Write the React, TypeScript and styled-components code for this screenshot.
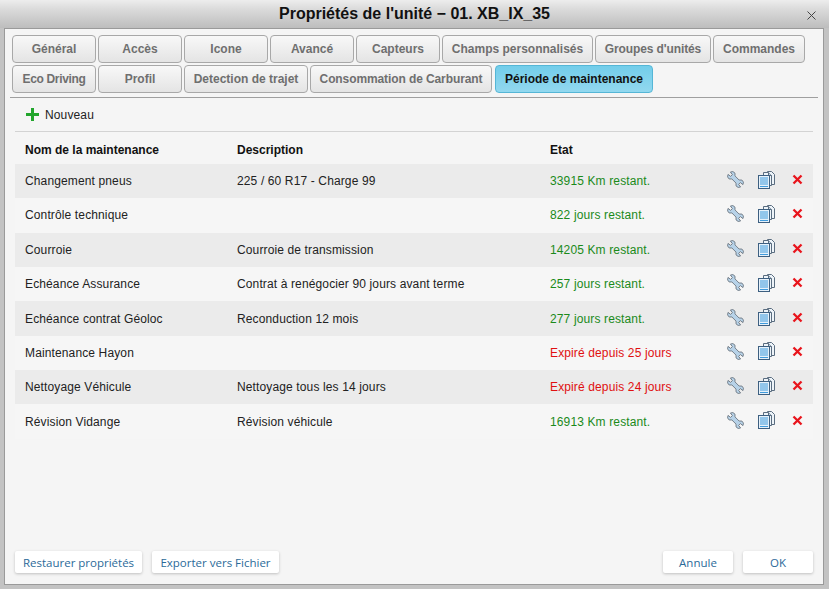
import React from "react";
import styled, { createGlobalStyle } from "styled-components";

const Global = createGlobalStyle`
  html, body { margin: 0; padding: 0; width: 829px; height: 589px; overflow: hidden; background: #c3c3c3; }
  * { box-sizing: border-box; }
`;

const Dialog = styled.div`
  width: 829px; height: 589px; display: flex; flex-direction: column;
  background: #c3c3c3;
  font-family: "Liberation Sans", Arial, sans-serif;
`;
const TitleBar = styled.div`
  height: 28px; flex: none; position: relative; display: flex; align-items: center; justify-content: center;
  background: linear-gradient(#ededed 0%, #dcdcdc 30%, #bdbdbd 100%);
  font-size: 16px; font-weight: 700; color: #111;
`;
const Close = styled.svg`
  position: absolute; left: 807px; top: 11px; width: 9px; height: 9px;
`;
const Panel = styled.div`
  flex: none; width: 820px; height: 557px; margin-left: 4px; display: flex; flex-direction: column;
  background: #f5f5f5; border: 1px solid #9a9a9a; padding: 6px 0 0 7px;
`;
const TabRows = styled.div`
  display: flex; flex-direction: column; gap: 2px;
`;
const TabRow = styled.div`
  display: flex; gap: 2px;
`;
const Tab = styled.div<{ $w: number; $active?: boolean; $ls?: number }>`
  width: ${p => p.$w}px; height: 28px; border-radius: 4px; display: flex; align-items: center; justify-content: center;
  font-size: 12px; font-weight: 700; white-space: nowrap;
  letter-spacing: ${p => p.$ls ?? 0}px;
  margin-left: ${p => (p.$active ? "1px" : "0")};
  border: 1px solid ${p => (p.$active ? "#55b6d6" : "#a8a8a8")};
  color: ${p => (p.$active ? "#111" : "#6f6f6f")};
  background: ${p => (p.$active ? "linear-gradient(#72cdea, #92d8ef)" : "linear-gradient(#f8f8f8, #e4e4e4)")};
`;
const TabLine = styled.div`
  height: 1px; background: #9f9f9f; width: 808px; margin: 4px 0 0 -2px;
`;
const Toolbar = styled.div`
  height: 34px; margin: 0 10px 0 3px; padding-left: 11px; border-bottom: 1px solid #d3d3d3; display: flex; align-items: center; gap: 6px;
  font-size: 12px; color: #222; letter-spacing: 0.13px;
`;
const Content = styled.div`
  flex: 1; margin: 0 10px 0 3px; display: flex; flex-direction: column;
`;
const HeadRow = styled.div`
  height: 31.9px; padding: 4px 0 0 10px; display: grid; grid-template-columns: 212px 313px 1fr; align-items: center;
  font-size: 12px; font-weight: 700; color: #111;
`;
const Row = styled.div<{ $odd: boolean }>`
  height: 34.36px; display: grid; grid-template-columns: 212px 313px 177px 31px 33px 1fr; padding-left: 10px; align-items: center;
  font-size: 12px; color: #222; letter-spacing: 0.13px;
  background: ${p => (p.$odd ? "#ebebeb" : "#f6f6f6")};
`;
const State = styled.span<{ $bad: boolean }>`
  color: ${p => (p.$bad ? "#e01010" : "#1a8a1a")};
`;
const IconCell = styled.div`
  display: flex; align-items: center; height: 18px; margin-bottom: 3px;
`;
const Footer = styled.div`
  height: 44px; flex: none; margin: 0 10px 0 3px; padding-top: 11px; display: flex;
`;
const Spacer = styled.div`
  flex: 1;
`;
const Button = styled.div<{ $w: number }>`
  width: ${p => p.$w}px; height: 22px; background: #fff; border-radius: 2px; display: flex; align-items: center; justify-content: center;
  font-family: "Open Sans", "Noto Sans", sans-serif; font-size: 11.5px; color: #2b6a99; white-space: nowrap;
  box-shadow: 0 1px 3px rgba(0,0,0,0.22);
`;
const ButtonGroup = styled.div`
  display: flex; gap: 10px;
`;

const Plus = () => (
  <svg width="13" height="13" viewBox="0 0 13 13">
    <path d="M5 0h3v5h5v3H8v5H5V8H0V5h5z" fill="#22a52c" />
  </svg>
);
const Wrench = () => (
  <svg width="17" height="17" viewBox="0 0 16 16">
    <path d="M5.5 .5 L7.5 2 L7.5 4.6 L11.4 8.5 L14 8.5 L15.5 10.5 L15 12.8 L12.6 10.9 L10.9 12.6 L12.8 15 L10.5 15.5 L8.5 14 L8.5 11.4 L4.6 7.5 L2 7.5 L.5 5.5 L1 3.2 L3.4 5.1 L5.1 3.4 L3.2 1 Z"
      fill="#b7d2e8" stroke="#707b85" strokeWidth="0.9" strokeLinejoin="round" />
  </svg>
);
const Copy = () => (
  <svg width="17" height="18" viewBox="0 0 17 18">
    <path d="M9.5 .5h4l3 3v10h-7z" fill="#eef4f9" stroke="#5a6d80" />
    <path d="M5.5 1.5h5l3 3v10h-8z" fill="#eef4f9" stroke="#5a6d80" />
    <path d="M10.5 1.5v3h3" fill="#c5d5e2" stroke="#5a6d80" />
    <rect x=".5" y="4.5" width="11" height="13" fill="#e6f1fa" stroke="#3d5f80" />
    <path d="M2 7h8M2 9h8M2 11h8M2 13h8M2 15.5h8" stroke="#3f9bdc" strokeWidth="1.2" />
  </svg>
);
const Cross = () => (
  <svg width="13" height="13" viewBox="0 0 13 13">
    <path d="M2.5 2.5 L10.5 10.5 M10.5 2.5 L2.5 10.5" stroke="#e8141c" strokeWidth="2.3" />
  </svg>
);

const row1: [string, number, number?][] = [["Général",84],["Accès",84],["Icone",84],["Avancé",84],["Capteurs",84],["Champs personnalisés",151],["Groupes d'unités",116,-0.12],["Commandes",92]];
const row2: [string, number, number?][] = [["Eco Driving",84,-0.35],["Profil",84],["Detection de trajet",124],["Consommation de Carburant",182,-0.1],["Période de maintenance",158]];

const rows: [string, string, string, boolean][] = [
  ["Changement pneus","225 / 60 R17 - Charge 99","33915 Km restant.",false],
  ["Contrôle technique","","822 jours restant.",false],
  ["Courroie","Courroie de transmission","14205 Km restant.",false],
  ["Echéance Assurance","Contrat à renégocier 90 jours avant terme","257 jours restant.",false],
  ["Echéance contrat Géoloc","Reconduction 12 mois","277 jours restant.",false],
  ["Maintenance Hayon","","Expiré depuis 25 jours",true],
  ["Nettoyage Véhicule","Nettoyage tous les 14 jours","Expiré depuis 24 jours",true],
  ["Révision Vidange","Révision véhicule","16913 Km restant.",false],
];

export default function App() {
  return (
    <Dialog>
      <Global />
      <TitleBar>
        Propriétés de l'unité − 01. XB_IX_35
        <Close viewBox="0 0 9 9"><path d="M.5 .5l8 8M8.5 .5l-8 8" stroke="#444" strokeWidth="1" /></Close>
      </TitleBar>
      <Panel>
        <TabRows>
          <TabRow>{row1.map(([t, w, ls]) => <Tab key={t} $w={w} $ls={ls}>{t}</Tab>)}</TabRow>
          <TabRow>{row2.map(([t, w, ls]) => <Tab key={t} $w={w} $ls={ls} $active={t.startsWith("Période")}>{t}</Tab>)}</TabRow>
        </TabRows>
        <TabLine />
        <Toolbar><Plus />Nouveau</Toolbar>
        <Content>
          <HeadRow><span>Nom de la maintenance</span><span>Description</span><span>Etat</span></HeadRow>
          {rows.map((r, i) => (
            <Row key={r[0]} $odd={i % 2 === 0}>
              <span>{r[0]}</span><span>{r[1]}</span><State $bad={r[3]}>{r[2]}</State>
              <IconCell><Wrench /></IconCell><IconCell><Copy /></IconCell><IconCell><Cross /></IconCell>
            </Row>
          ))}
        </Content>
        <Footer>
          <ButtonGroup><Button $w={127}>Restaurer propriétés</Button><Button $w={127}>Exporter vers Fichier</Button></ButtonGroup>
          <Spacer />
          <ButtonGroup><Button $w={70}>Annule</Button><Button $w={70}>OK</Button></ButtonGroup>
        </Footer>
      </Panel>
    </Dialog>
  );
}
